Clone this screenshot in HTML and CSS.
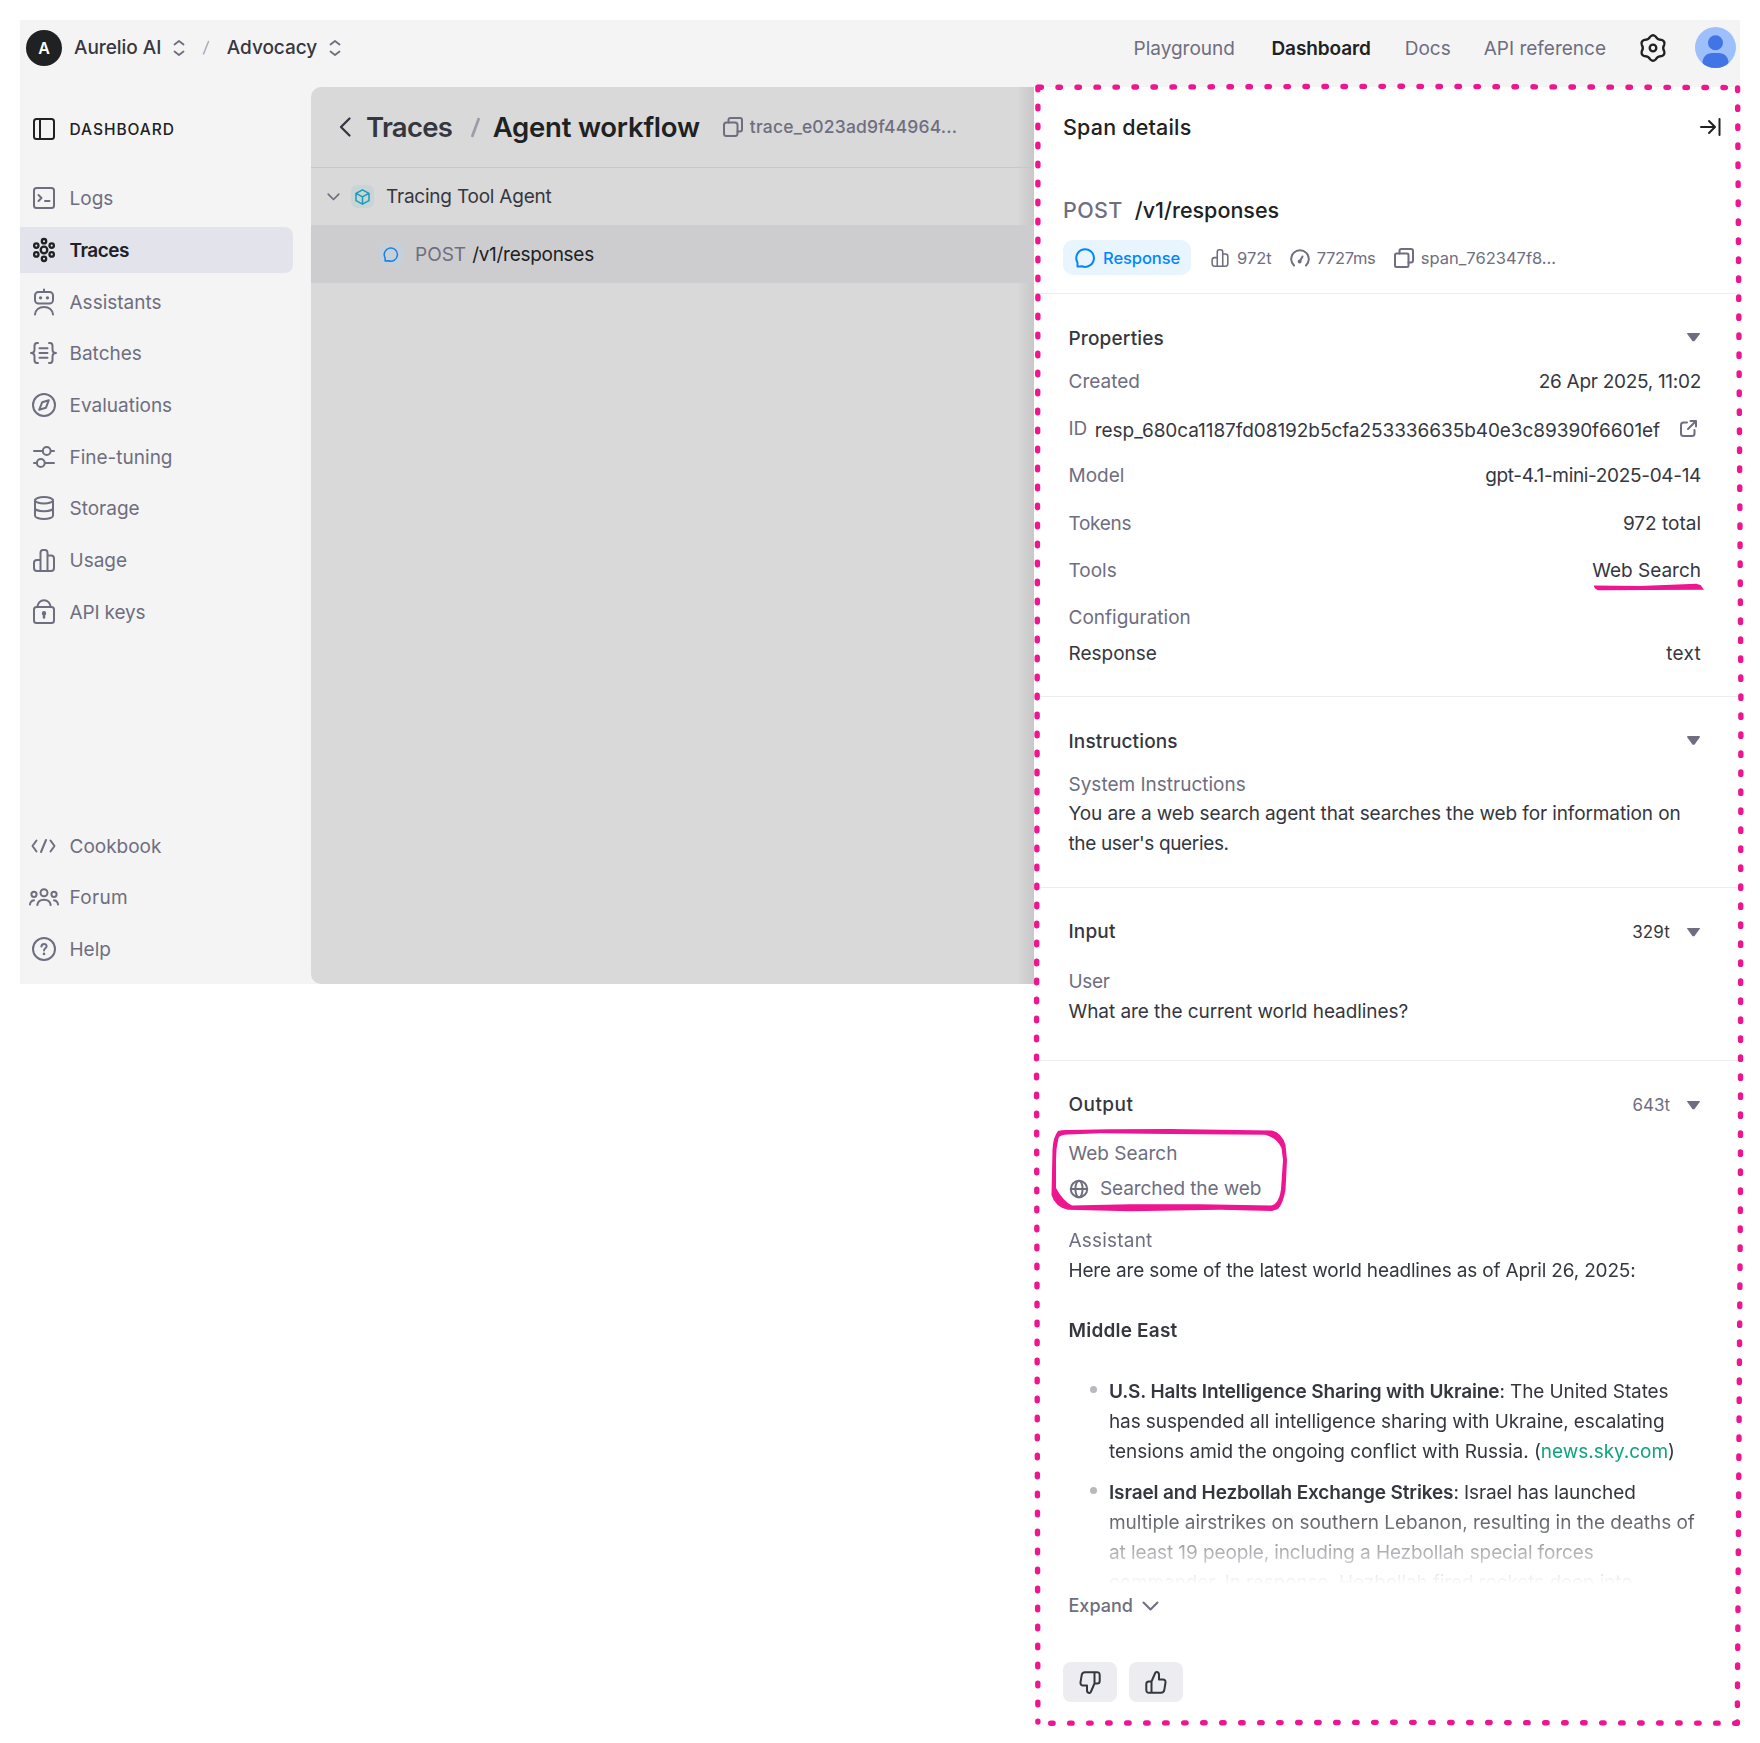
FILE: index.html
```html
<!DOCTYPE html>
<html lang="en">
<head>
<meta charset="utf-8">
<title>Traces - Dashboard</title>
<link rel="stylesheet" href="styles.css">
</head>
<body>
<div class="app">
  <header class="topbar">
    <span class="org-avatar">A</span>
    <span class="crumb">Aurelio AI</span>
    <svg class="ico updown" width="12" height="18" viewBox="0 0 12 18"><path d="M1.500 5.500 6 2l4.500 3.500M1.500 12.500 6 16l4.500-3.500"/></svg>
    <svg class="ico crumb-slash" width="8" height="16" viewBox="0 0 8 16"><path d="M6.500 1.500 1.500 14"/></svg>
    <span class="crumb">Advocacy</span>
    <svg class="ico updown" width="12" height="18" viewBox="0 0 12 18"><path d="M1.500 5.500 6 2l4.500 3.500M1.500 12.500 6 16l4.500-3.500"/></svg>
    <nav class="topnav">
      <a class="first">Playground</a>
      <a class="current">Dashboard</a>
      <a>Docs</a>
      <a>API reference</a>
    </nav>
    <svg class="ico gear" width="28" height="28" viewBox="0 0 28 28"><path d="M11.350 2.500Q14 0 16.650 2.500 18.500 6.200 22.630 5.950 26.100 7 25.280 10.550 23 14 25.280 17.450 26.100 21 22.630 22.050 18.500 21.800 16.650 25.500 14 28 11.350 25.500 9.500 21.800 5.370 22.050 1.900 21 2.720 17.450 5 14 2.720 10.550 1.900 7 5.370 5.950 9.500 6.200 11.350 2.500Z"/><circle cx="14" cy="14" r="3.300"/></svg>
    <svg class="user-avatar" width="41" height="41" viewBox="0 0 41 41"><defs><clipPath id="face"><circle cx="20.500" cy="20.500" r="20.500"/></clipPath></defs><g clip-path="url(#face)"><path fill="#9dc0fc" d="M0 0h41v41H0z"/><circle cx="20.500" cy="15.800" r="7.500" fill="#4174e4"/><path fill="#4174e4" d="M7.500 41v-5c0-6 4-10 10-10h6c6 0 10 4 10 10v5z"/></g></svg>
  </header>

  <div class="body">
    <aside class="sidebar">
      <div class="side-head">
        <span class="side-ico"><svg class="ico" width="22" height="22" viewBox="0 0 22 22"><rect x="1" y="1" width="20" height="20" rx="2.500"/><path d="M7 1v20"/></svg></span>
        <span class="side-text">DASHBOARD</span>
      </div>
      <nav class="side-nav">
        <a class="side-link"><span class="side-ico"><svg class="ico" width="22" height="22" viewBox="0 0 22 22"><rect x="1" y="1" width="20" height="20" rx="2.500"/><path d="M5.500 8 8.500 11l-3 3M12 14h4.500"/></svg></span><span class="side-text">Logs</span></a>
        <a class="side-link active"><span class="side-ico"><svg class="ico" width="22" height="24" viewBox="0 0 22 24"><circle cx="11" cy="12" r="3.300"/><circle cx="11" cy="3.200" r="2.200"/><circle cx="11" cy="20.800" r="2.200"/><circle cx="3.300" cy="7.600" r="2.200"/><circle cx="18.700" cy="7.600" r="2.200"/><circle cx="3.300" cy="16.400" r="2.200"/><circle cx="18.700" cy="16.400" r="2.200"/></svg></span><span class="side-text">Traces</span></a>
        <a class="side-link"><span class="side-ico"><svg class="ico" width="22" height="26" viewBox="0 0 22 26"><rect x="2" y="3" width="18" height="11.500" rx="3.500"/><path d="M11 .500v2.500M2 25.500c.5-4.500 4-7.500 9-7.500s8.500 3 9 7.500"/><path d="M7.500 8.800h.1M14.400 8.800h.1" stroke-width="3.200"/></svg></span><span class="side-text">Assistants</span></a>
        <a class="side-link"><span class="side-ico"><svg class="ico" width="27" height="22" viewBox="0 0 27 22"><path d="M8 1H7C5 1 4.500 2.300 4.500 4v3.500C4.500 9.500 3 11 1 11c2 0 3.500 1.500 3.500 3.500V18c0 1.700.5 3 2.500 3h1M19 1h1c2 0 2.500 1.300 2.500 3v3.500c0 2 1.500 3.500 3.500 3.500-2 0-3.500 1.500-3.500 3.500V18c0 1.700-.5 3-2.500 3h-1M9.500 6.200h8M9.500 11h8M9.500 15.800h8"/></svg></span><span class="side-text">Batches</span></a>
        <a class="side-link"><span class="side-ico"><svg class="ico" width="24" height="24" viewBox="0 0 24 24"><circle cx="12" cy="12" r="11"/><path d="m16.800 7.200-6.600 2-3 7.600 6.700-2z"/></svg></span><span class="side-text">Evaluations</span></a>
        <a class="side-link"><span class="side-ico"><svg class="ico" width="22" height="22" viewBox="0 0 22 22"><path d="M1 5h8.500M18 5h3M1 17h2.500M12 17h9"/><circle cx="13.700" cy="5" r="3.900"/><circle cx="7.800" cy="17" r="3.900"/></svg></span><span class="side-text">Fine-tuning</span></a>
        <a class="side-link"><span class="side-ico"><svg class="ico" width="20" height="24" viewBox="0 0 20 24"><ellipse cx="10" cy="4.200" rx="9" ry="3.200"/><path d="M1 4.200v15.500C1 21.500 5 23 10 23s9-1.500 9-3.300V4.200M1 12c0 1.800 4 3.200 9 3.200s9-1.400 9-3.200"/></svg></span><span class="side-text">Storage</span></a>
        <a class="side-link"><span class="side-ico"><svg class="ico" width="22" height="23" viewBox="0 0 22 23"><path d="M7.500 22V4c0-2 1-3 2.500-3h2c1.500 0 2.500 1 2.500 3v18M7.500 11H4c-2 0-3 1-3 3v5c0 2 1 3 3 3h14c2 0 3-1 3-3V9.500c0-2-1-3-3-3h-3.500"/></svg></span><span class="side-text">Usage</span></a>
        <a class="side-link"><span class="side-ico"><svg class="ico" width="22" height="25" viewBox="0 0 22 25"><rect x="1" y="8" width="20" height="16" rx="2.500"/><path d="M4.500 8C4.500 4 7.500 1.200 11 1.200S17.500 4 17.500 8"/><path d="M11 14.500v4" stroke-width="2.500"/><circle cx="11" cy="14.300" r="1.200"/></svg></span><span class="side-text keys">API keys</span></a>
      </nav>
      <nav class="side-nav side-foot">
        <a class="side-link"><span class="side-ico"><svg class="ico" width="25" height="14" viewBox="0 0 25 14"><path d="M5.500 1.500 1.500 7l4 5.500M19.500 1.500l4 5.500-4 5.500M15 1 10 13"/></svg></span><span class="side-text">Cookbook</span></a>
        <a class="side-link"><span class="side-ico"><svg class="ico" width="30" height="18" viewBox="0 0 30 18"><circle cx="15" cy="4.800" r="3.500"/><circle cx="5" cy="6.300" r="2.600"/><circle cx="25" cy="6.300" r="2.600"/><path d="M8.300 17c.5-3.500 3-5.300 6.700-5.300s6.200 1.800 6.700 5.300M1 16.500c.2-2.200 1.500-3.800 4-4.200M29 16.500c-.2-2.200-1.500-3.800-4-4.200"/></svg></span><span class="side-text forum">Forum</span></a>
        <a class="side-link"><span class="side-ico"><svg class="ico" width="24" height="24" viewBox="0 0 24 24"><circle cx="12" cy="12" r="11"/><path d="M9.400 9.600c.2-3.600 5.400-3.400 5.200-.2-.1 1.900-2.600 1.900-2.600 4"/><path d="M12 16.900v.1" stroke-width="2.600"/></svg></span><span class="side-text">Help</span></a>
      </nav>
    </aside>

    <main class="main">
      <div class="main-head">
        <svg class="ico back" width="12" height="20" viewBox="0 0 12 20"><path d="M10.500 1.500 2 10l8.500 8.500"/></svg>
        <span class="title">Traces</span>
        <svg class="ico title-slash" width="11" height="21" viewBox="0 0 11 21"><path d="M9 1 2 20"/></svg>
        <span class="title title-now">Agent workflow</span>
        <svg class="ico copy" width="20" height="20" viewBox="0 0 20 20"><rect x="1" y="5.500" width="13.500" height="13.500" rx="2.500"/><path d="M5.500 5.500V3c0-1.300.7-2 2-2H17c1.300 0 2 .7 2 2v9.500c0 1.300-.7 2-2 2h-2.500"/></svg>
        <span class="trace-id">trace_e023ad9f44964...</span>
      </div>
      <div class="row">
        <svg class="ico chev" width="13" height="8" viewBox="0 0 13 8"><path d="m1.200 1.200 5.300 5.300 5.300-5.300"/></svg>
        <span class="badge teal"><svg class="ico" width="15" height="16" viewBox="0 0 15 16"><path d="M7.500.8 14 4.300v7.400l-6.500 3.500L1 11.700V4.300zM1.200 4.400l6.300 3.500 6.300-3.500M7.500 8v7"/></svg></span>
        <span class="row-name">Tracing Tool Agent</span>
      </div>
      <div class="row selected">
        <span class="badge blue"><svg class="ico" width="15" height="15" viewBox="0 0 20 20"><path d="M1.500 18.500v-4A8.800 8.800 0 1 1 6 18.300c-1.500.2-3 .2-4.500.2z"/></svg></span>
        <span class="row-method">POST</span>
        <span class="row-path">/v1/responses</span>
      </div>
    </main>

    <section class="details">
      <div class="d-head">
        <span>Span details</span>
        <svg class="ico" width="21" height="18" viewBox="0 0 21 18"><path d="M1 9h13.500M9 3l6 6-6 6M19.500 1v16"/></svg>
      </div>
      <div class="summary">
        <div class="endpoint"><span class="method">POST</span><span>/v1/responses</span></div>
        <div class="meta">
          <span class="pill"><svg class="ico" width="20" height="20" viewBox="0 0 20 20"><path d="M1.500 18.500v-4A8.800 8.800 0 1 1 6 18.300c-1.500.2-3 .2-4.500.2z"/></svg><span>Response</span></span>
          <span class="stat"><svg class="ico" width="18" height="18" viewBox="0 0 22 23"><path d="M7.500 22V4c0-2 1-3 2.500-3h2c1.500 0 2.500 1 2.500 3v18M7.500 11H4c-2 0-3 1-3 3v5c0 2 1 3 3 3h14c2 0 3-1 3-3V9.500c0-2-1-3-3-3h-3.500"/></svg><span>972t</span></span>
          <span class="stat latency"><svg class="ico" width="20" height="18" viewBox="0 0 20 18"><path d="M4 16.500a8.800 8.800 0 1 1 12 0"/><path d="M9.500 13 12.500 7.500"/><circle cx="9.600" cy="12.600" r="1"/></svg><span>7727ms</span></span>
          <span class="stat"><svg class="ico" width="20" height="20" viewBox="0 0 20 20"><rect x="1" y="5.500" width="13.500" height="13.500" rx="1.500"/><path d="M5.500 5.500V3c0-1.300.7-2 2-2H17c1.300 0 2 .7 2 2v9.500c0 1.300-.7 2-2 2h-2.500"/></svg><span>span_762347f8...</span></span>
        </div>
      </div>

      <div class="section props">
        <div class="sec-head"><span>Properties</span><i class="tri"></i></div>
        <div class="prop"><span class="label">Created</span><span class="date">26 Apr 2025, 11:02</span></div>
        <div class="prop id-row"><span class="label">ID</span><span class="id-val">resp_680ca1187fd08192b5cfa253336635b40e3c89390f6601ef</span><svg class="ico" width="17" height="17" viewBox="0 0 17 17"><path d="M7 2.500H3.500c-1.500 0-2.500 1-2.500 2.500v8.500C1 15 2 16 3.500 16H12c1.500 0 2.500-1 2.500-2.500V10M10.500 1H16v5.500M16 1 8 9"/></svg></div>
        <div class="prop"><span class="label">Model</span><span class="model">gpt-4.1-mini-2025-04-14</span></div>
        <div class="prop"><span class="label tokens">Tokens</span><span>972 total</span></div>
        <div class="prop"><span class="label">Tools</span><span>Web Search</span></div>
        <div class="prop"><span class="label">Configuration</span></div>
        <div class="prop tight"><span>Response</span><span class="format">text</span></div>
      </div>

      <div class="section instr">
        <div class="sec-head"><span>Instructions</span><i class="tri"></i></div>
        <div class="label">System Instructions</div>
        <p>You are a web search agent that searches the web for information on<br><span class="snug">the user's queries.</span></p>
      </div>

      <div class="section input">
        <div class="sec-head"><span>Input</span><span class="count dark">329t</span><i class="tri"></i></div>
        <div class="label user">User</div>
        <p>What are the current world headlines?</p>
      </div>

      <div class="section output">
        <div class="sec-head"><span>Output</span><span class="count">643t</span><i class="tri"></i></div>
        <div class="label">Web Search</div>
        <div class="label searched"><svg class="ico" width="18" height="18" viewBox="0 0 18 18"><circle cx="9" cy="9" r="8.200"/><ellipse cx="9" cy="9" rx="3.600" ry="8.200"/><path d="M.8 9h16.400"/></svg><span>Searched the web</span></div>
        <div class="clip">
          <div class="label assistant">Assistant</div>
          <p class="lead">Here are some of the latest world headlines as of April 26, 2025:</p>
          <h3>Middle East</h3>
          <ul>
            <li><b>U.S. Halts Intelligence Sharing with Ukraine</b>: The United States<br>has suspended all intelligence sharing with Ukraine, escalating<br><span class="loose">tensions amid the ongoing conflict with Russia. (<a class="link">news.sky.com</a>)</span></li>
            <li><b>Israel and Hezbollah Exchange Strikes</b>: Israel has launched<br><span class="loose">multiple airstrikes on southern Lebanon, resulting in the deaths of</span><br>at least 19 people, including a Hezbollah special forces<br>commander. In response, Hezbollah fired rockets deep into</li>
          </ul>
        </div>
        <div class="expand"><span>Expand</span><svg class="ico" width="17" height="10" viewBox="0 0 17 10"><path d="m1.500 1.500 7 7 7-7"/></svg></div>
        <div class="votes">
          <span class="vote"><svg class="ico flip" width="22" height="23" viewBox="0 0 22 23"><path d="M6.500 10.500 10.200 2c.2-.6.7-1 1.300-1C13 1 14 2.200 14 3.800V8.500h4c1.700 0 2.800 1.500 2.500 3.200l-1.200 7.200c-.3 1.700-1.500 2.900-3.300 2.900H4c-1.700 0-2.700-1-2.700-2.700V13c0-1.500 1-2.500 2.500-2.500zM6.500 10.500v11.300"/></svg></span>
          <span class="vote"><svg class="ico" width="22" height="23" viewBox="0 0 22 23"><path d="M6.500 10.500 10.200 2c.2-.6.7-1 1.300-1C13 1 14 2.200 14 3.800V8.500h4c1.700 0 2.800 1.500 2.500 3.200l-1.200 7.200c-.3 1.700-1.500 2.900-3.300 2.900H4c-1.700 0-2.700-1-2.700-2.700V13c0-1.500 1-2.500 2.500-2.500zM6.500 10.500v11.300"/></svg></span>
        </div>
      </div>

      <!-- Hand-drawn annotations over the panel -->
      <svg class="marks" width="726" height="1663" viewBox="1024 77 726 1663">
        <g class="dots">
          <path d="M1037.900 87.300V300L1036.500 1060 1037.900 1722"/>
          <path d="M1039 87.300 1400 86.300 1730 87.600"/>
          <path d="M1737.600 88 1740.900 700 1740.400 1200 1737.300 1723"/>
          <path d="M1050.700 1723.200 1400 1722.300 1738 1723.200"/>
        </g>
        <path class="ink" d="M1593.800 585.500 1640 586 1696 583.700 1700.500 585 1704 589.800 1598 590.200Q1594 588.500 1593.800 585.500Z"/>
        <path class="ink" fill-rule="evenodd" d="M1058 1131Q1062 1129.500 1070 1130L1110 1129.200 1170 1129 1272 1130.500Q1282 1133 1285.500 1145L1287 1160 1285.500 1190Q1283 1204 1278 1209L1272 1211 1220 1209.800 1130 1211.200 1068 1209.800Q1055 1207 1051.500 1195L1052.500 1150Q1053 1137 1058 1131ZM1058.500 1138Q1056 1148 1056 1160L1056 1188Q1063 1201 1072 1205.600L1130 1204.300 1200 1204.300 1271 1205.600Q1279 1204 1281 1189L1283 1160 1281.500 1148Q1277 1138 1265 1134.800L1170 1134 1100 1133.300 1068 1134.600Q1060 1135 1058.500 1138Z"/>
      </svg>
    </section>
  </div>
</div>
</body>
</html>
```

FILE: styles.css
```css
* { box-sizing: border-box; }
body { margin: 0; height: 1743px; background: #fff; color: #353740; font: 400 19px/30px Inter, "Liberation Sans", sans-serif; overflow: hidden; }
p, h3, ul { margin: 0; padding: 0; }
a { color: inherit; text-decoration: none; }
span, b, p, li { white-space: nowrap; }
.ico { flex: none; display: block; fill: none; stroke: currentColor; stroke-width: 2; stroke-linecap: round; stroke-linejoin: round; overflow: visible; }

/* Top bar */
.app { margin: 20px; height: 964px; background: #f4f4f4; }
.topbar { height: 67px; padding: 0 4px 12px 6px; display: flex; align-items: center; }
.org-avatar { width: 36px; height: 36px; border-radius: 50%; background: #202123; color: #fff; font-size: 16px; font-weight: 600; line-height: 36px; text-align: center; margin-right: 12px; }
.crumb { font-weight: 500; letter-spacing: -.05px; line-height: 32px; padding-top: 1px; }
.updown { color: #6e6e80; stroke-width: 1.800; margin-left: 11.500px; }
.crumb-slash { color: #acacbe; stroke-width: 1.500; margin: 0 17px; }
.topnav { margin-left: auto; display: flex; gap: 33px; padding-top: 2px; color: #6e6e80; }
.first { margin-right: 3.500px; }
.current { color: #202123; font-weight: 600; letter-spacing: -.1px; margin-right: 1px; }
.gear { color: #202123; margin: 0 28px 0 33px; stroke-width: 2.300; }

/* Sidebar */
.body { display: flex; align-items: flex-start; height: 897px; }
.sidebar { width: 291px; height: 897px; padding: 19px 18px 12px 0; display: flex; flex-direction: column; color: #6e6e80; }
.side-head { height: 46px; margin-bottom: 23.500px; display: flex; align-items: center; gap: 2.500px; color: #202123; font-size: 15.500px; font-weight: 500; letter-spacing: .95px; }
.side-ico { width: 47px; flex: none; display: flex; justify-content: center; }
.side-nav { display: flex; flex-direction: column; gap: 6px; }
.side-link { height: 45.700px; display: flex; align-items: center; gap: 2.500px; }
.side-text { padding-top: 2px; }
.keys { letter-spacing: -.15px; }
.forum { letter-spacing: .3px; }
.side-link.active { background: #e3e3ec; border-radius: 0 8px 8px 0; color: #202123; font-weight: 600; letter-spacing: -.5px; }
.active .ico { stroke-width: 2.300; }
.side-foot { margin-top: auto; }

/* Trace tree */
.main { width: 723px; height: 897px; background: linear-gradient(90deg, rgba(0,0,0,0) 705px, rgba(0,0,0,.08)) #d9d9d9; border-radius: 10px 0 0 10px; overflow: hidden; }
.main-head { height: 81px; border-bottom: 1px solid #c8c8cb; display: flex; align-items: center; padding-left: 28px; }
.back { color: #353740; stroke-width: 2.300; margin-right: 15px; }
.title { font-size: 27.500px; font-weight: 600; letter-spacing: -.7px; }
.title-now { color: #202123; letter-spacing: -.23px; }
.title-slash { color: #9c9caa; stroke-linecap: butt; stroke-width: 2.700; margin: 0 12px 0 17.500px; }
.copy { color: #6e6e80; margin: 0 7px 0 23px; }
.trace-id { font-size: 17.500px; font-weight: 500; color: #6e6e80; letter-spacing: .18px; }
.row { height: 57px; display: flex; align-items: center; padding-left: 16px; }
.row.selected { height: 58px; background: #cdcdd0; padding-left: 69px; }
.chev { color: #6e6e80; stroke-width: 1.700; margin-right: 11px; }
.badge { width: 23px; height: 23px; border-radius: 6px; display: flex; align-items: center; justify-content: center; margin-right: 12px; }
.badge .ico { stroke-width: 1.500; }
.teal { background: #c8d5d6; color: #1a9cb8; }
.blue { background: #c5d0da; color: #1a7fe0; }
.blue .ico { stroke-width: 2; }
.row-name { letter-spacing: -.22px; }
.row-method { color: #6e6e80; margin-right: 6px; }
.row-path { color: #202123; letter-spacing: -.28px; }
.selected .row-method, .selected .row-path { padding-top: 1px; }

/* Span details panel */
.details { position: relative; width: 706px; height: 1637px; background: #fff; }
.d-head { height: 80px; padding: 0 19px 0 29px; display: flex; align-items: center; justify-content: space-between; font-size: 21.500px; font-weight: 500; letter-spacing: .18px; color: #202123; }
.summary { padding: 28px 0 18px 29px; border-bottom: 1px solid #ececf1; }
.endpoint { display: flex; gap: 12px; font-size: 21.500px; font-weight: 500; color: #202123; margin-bottom: 15px; }
.method { color: #6e6e80; letter-spacing: .4px; }
.meta { display: flex; align-items: center; font-size: 16.500px; color: #6e6e80; }
.pill { width: 128px; height: 35px; border-radius: 10px; background: #e8f5ff; color: #0285ff; font-weight: 500; letter-spacing: -.08px; display: flex; align-items: center; gap: 7px; padding-left: 13px; margin-right: 20px; }
.stat { display: flex; align-items: center; gap: 8px; margin-right: 18px; }
.latency { gap: 7px; letter-spacing: -.35px; margin-right: 18.500px; }
.latency + .stat { gap: 7px; }
.section { padding: 29px 39px 0 34.500px; border-bottom: 1px solid #ececf1; }
.sec-head { height: 30px; display: flex; align-items: center; font-weight: 500; letter-spacing: .15px; }
.tri { width: 13px; height: 9px; background: #6e6e80; clip-path: polygon(4% 0, 96% 0, 100% 12%, 57% 96%, 43% 96%, 0 12%); margin: 0 1px 0 auto; }
.count { margin-left: auto; font-size: 17px; font-weight: 400; color: #6e6e80; }
.count.dark { color: #353740; }
.count + .tri { margin-left: 17px; }
.label { color: #6e6e80; }
p, li { letter-spacing: -.11px; }
.snug { letter-spacing: -.36px; }
.loose { letter-spacing: -.04px; }
.props { height: 403px; padding-top: 29.700px; display: flex; flex-direction: column; }
.props .tri, .instr .tri { margin-bottom: 3px; }
.prop { height: 30px; margin-top: 17.300px; display: flex; align-items: center; justify-content: space-between; }
.sec-head + .prop { margin-top: 13px; }
.prop.tight { margin-top: 6px; }
.id-row { padding-right: 4.500px; }
.id-row .ico { color: #6e6e80; }
.id-val { letter-spacing: -.06px; padding-top: 5px; margin: 0 auto 0 7.500px; }
.date { letter-spacing: -.29px; }
.model { letter-spacing: -.33px; }
.tokens { letter-spacing: -.3px; }
.format { letter-spacing: .3px; }
.instr { height: 191px; padding-top: 30px; }
.instr .label { margin: 13px 0 -1px; }
.input { height: 173px; }
.input .label { margin-top: 20px; }
.user { letter-spacing: -.3px; }
.input p { margin-top: -.5px; letter-spacing: -.06px; }
.output { border: 0; }
.output .sec-head { letter-spacing: .45px; }
.output .count { letter-spacing: 0; }
.output > .label { margin-top: 19px; }
.output > .searched { margin-top: 5px; display: flex; align-items: center; gap: 12.500px; padding-left: 1px; letter-spacing: -.1px; }
.clip { margin-top: 22px; height: 358px; overflow: hidden; -webkit-mask-image: linear-gradient(#000 276px, transparent 358px); mask-image: linear-gradient(#000 276px, transparent 358px); }
.assistant { letter-spacing: .2px; }
.lead { letter-spacing: -.17px; }
h3 { font-size: 19px; font-weight: 600; letter-spacing: .2px; margin: 30px 0 31px; }
ul { list-style: none; padding-left: 40.500px; }
li { position: relative; margin-bottom: 10px; line-height: 30.200px; }
li::before { content: ""; position: absolute; left: -19px; top: 9px; width: 7px; height: 7px; border-radius: 50%; background: #b8b8bd; }
b { font-weight: 600; letter-spacing: -.14px; }
.link { color: #10a37f; }
.expand { margin-top: 7px; height: 30px; display: flex; align-items: center; gap: 9px; color: #6e6e80; font-weight: 500; font-size: 18px; }
.votes { margin: 41px 0 0 -5.500px; display: flex; gap: 12px; }
.vote { width: 54px; height: 40px; border-radius: 8px; background: #ececf1; display: flex; align-items: center; justify-content: center; }
.flip { transform: rotate(180deg); }

/* Annotations */
.marks { position: absolute; left: -10px; top: -10px; pointer-events: none; }
.dots { fill: none; stroke: #ef1590; stroke-width: 5.400; stroke-linecap: round; stroke-dasharray: 2.400 16.600; }
.ink { fill: #ef1590; }
```
